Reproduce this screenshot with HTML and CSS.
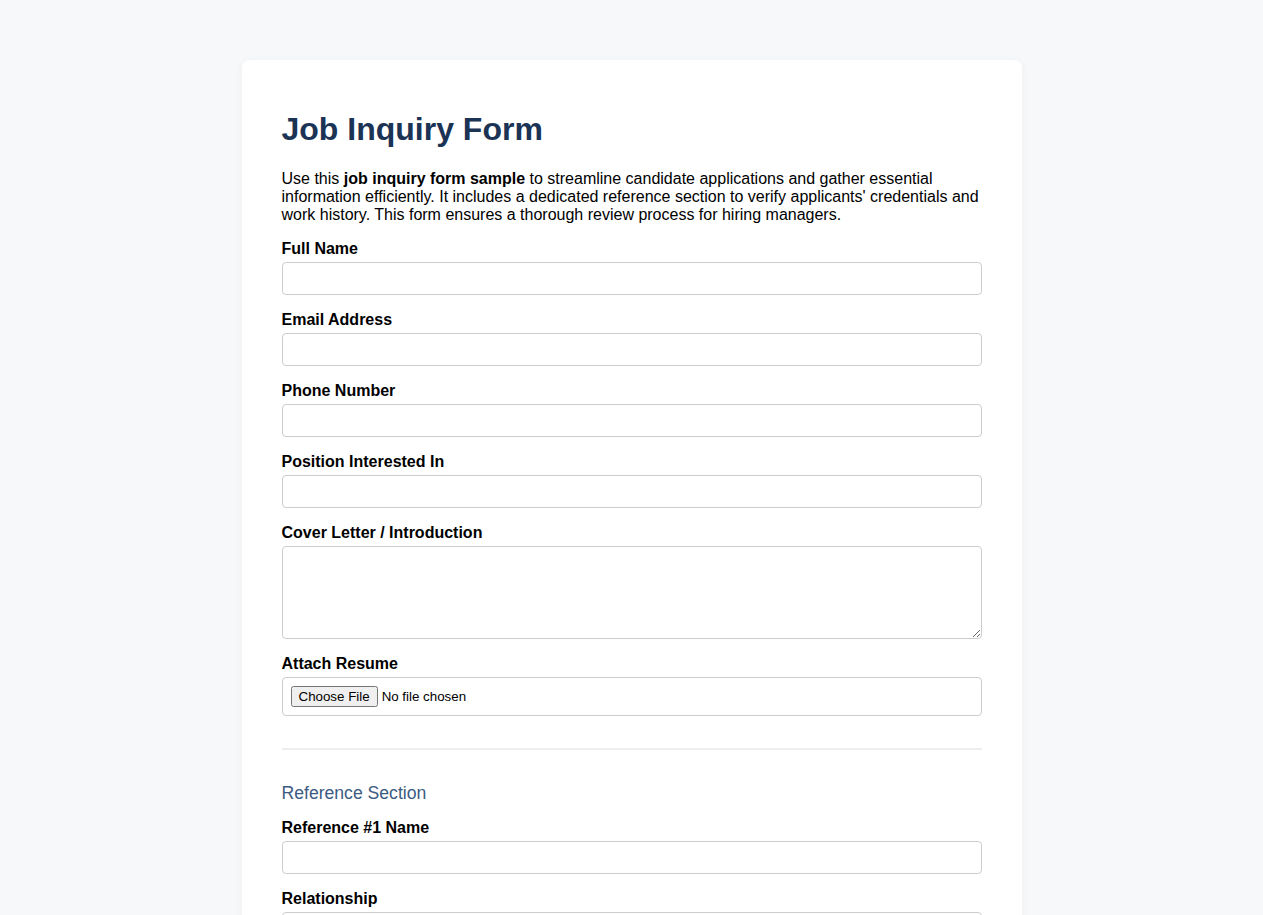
FILE: index.html
```html
<!DOCTYPE html>
<html lang="en">
<head>
<meta charset="utf-8">
<title>Job Inquiry Form</title>
<link rel="stylesheet" href="styles.css">
</head>
<body>
<div class="card">
  <h1 class="title">Job Inquiry Form</h1>
  <p class="intro">Use this <strong>job inquiry form sample</strong> to streamline candidate applications and gather essential information efficiently. It includes a dedicated reference section to verify applicants' credentials and work history. This form ensures a thorough review process for hiring managers.</p>
  <form class="form">
    <div class="group">
      <label class="label" for="name">Full Name</label>
      <input class="field" id="name" type="text">
    </div>
    <div class="group">
      <label class="label" for="email">Email Address</label>
      <input class="field" id="email" type="email">
    </div>
    <div class="group">
      <label class="label" for="phone">Phone Number</label>
      <input class="field" id="phone" type="tel">
    </div>
    <div class="group">
      <label class="label" for="position">Position Interested In</label>
      <input class="field" id="position" type="text">
    </div>
    <div class="group">
      <label class="label" for="cover">Cover Letter / Introduction</label>
      <textarea class="field area" id="cover"></textarea>
    </div>
    <div class="group">
      <label class="label" for="resume">Attach Resume</label>
      <input class="field file" id="resume" type="file">
    </div>
    <hr class="divider">
    <h3 class="section">Reference Section</h3>
    <div class="group">
      <label class="label" for="ref1">Reference #1 Name</label>
      <input class="field" id="ref1" type="text">
    </div>
    <div class="group">
      <label class="label" for="rel1">Relationship</label>
      <input class="field" id="rel1" type="text">
    </div>
    <div class="group">
      <label class="label" for="contact1">Contact Information</label>
      <input class="field" id="contact1" type="text">
    </div>
    <button class="submit" type="submit">Submit Inquiry</button>
  </form>
</div>
</body>
</html>
```
FILE: styles.css
```css
html, body {
  margin: 0;
  padding: 0;
}
body {
  background: #f7f8fa;
  font-family: "Liberation Sans", Arial, sans-serif;
  color: #000;
  padding: 60px 0;
}
.card {
  max-width: 700px;
  margin: 0 auto;
  background: #fff;
  padding: 30px 40px 40px;
  border-radius: 8px;
  box-shadow: 0 2px 10px rgba(0, 0, 0, 0.05);
}
.title {
  font-size: 32px;
  font-weight: bold;
  color: #1b3354;
  margin: 21.44px 0;
}
.intro {
  font-size: 16px;
  margin: 16px 0;
}
.group {
  margin-bottom: 16px;
}
.label {
  display: block;
  font-weight: bold;
  font-size: 16px;
  margin-bottom: 4px;
}
.field {
  display: block;
  width: 100%;
  box-sizing: border-box;
  height: 33px;
  padding: 8px;
  border: 1px solid #ccc;
  border-radius: 4px;
  font-family: "Liberation Sans", Arial, sans-serif;
  font-size: 14px;
  background: #fff;
}
.area {
  height: 93px;
  resize: vertical;
}
.file {
  height: 39px;
  font-size: 13.33px;
  padding: 8px;
}
.divider {
  border: 0;
  border-top: 2px solid #eee;
  margin: 32px 0 33px;
}
.section {
  font-size: 17.6px;
  font-weight: normal;
  color: #3b5b82;
  margin: 0 0 15px;
}
.submit {
  margin-top: 10px;
  padding: 10px 20px;
  background: #1b3354;
  color: #fff;
  border: 0;
  border-radius: 4px;
  font-size: 16px;
  font-family: "Liberation Sans", Arial, sans-serif;
}
```
